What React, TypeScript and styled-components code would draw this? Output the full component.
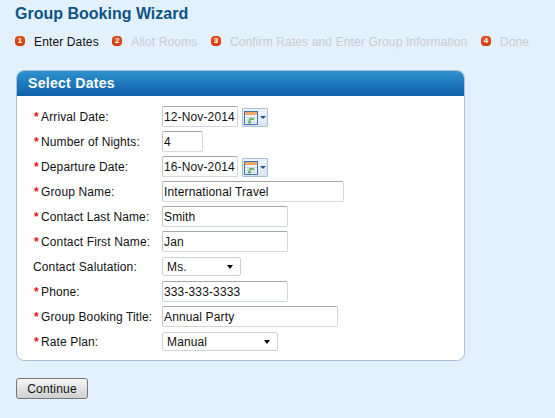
import styled, { createGlobalStyle } from "styled-components";

const GlobalStyle = createGlobalStyle`
  html, body {
    margin: 0;
    padding: 0;
    background: #e3f0fe;
  }
  body {
    font-family: "Liberation Sans", Arial, sans-serif;
    font-size: 12px;
    letter-spacing: 0.13px;
    color: #111;
  }
`;

const Page = styled.div`
  width: 555px;
  height: 418px;
  overflow: hidden;
  padding: 5px 0 0 16px;
  box-sizing: border-box;
`;

const Title = styled.h1`
  margin: 0 0 0 -1px;
  font-size: 16px;
  line-height: 18px;
  font-weight: bold;
  letter-spacing: 0;
  color: #0d5487;
`;

const Steps = styled.ol`
  display: flex;
  align-items: center;
  list-style: none;
  margin: 10px 0 0 -1px;
  padding: 0;
  height: 18px;
  gap: 13.5px;
`;

const Step = styled.li<{ $active?: boolean }>`
  display: flex;
  align-items: center;
  gap: 9px;
  color: ${({ $active }) => ($active ? "#111" : "#c9cdd2")};
`;

const Badge = styled.span`
  display: block;
  width: 10px;
  height: 10px;
  margin-top: -2px;
  border-radius: 4px;
  background: radial-gradient(circle at 50% 35%, #f2561c, #c93207);
  color: #fff;
  font-size: 8px;
  font-weight: bold;
  line-height: 10px;
  letter-spacing: 0;
  text-align: center;
`;

const Panel = styled.section`
  width: 449px;
  margin-top: 19px;
  box-sizing: border-box;
  background: #fff;
  border: 1px solid #a9c0da;
  border-radius: 8px;
  overflow: hidden;
`;

const PanelHeader = styled.h2`
  margin: -1px -1px 0;
  height: 26px;
  padding-left: 12px;
  font-size: 14px;
  line-height: 26px;
  font-weight: bold;
  letter-spacing: 0.3px;
  color: #fff;
  background: linear-gradient(#2f95d0, #0f5fa8);
`;

const Form = styled.div`
  display: grid;
  grid-template-columns: 129px 1fr;
  grid-auto-rows: 25px;
  padding: 10px 0 4px 16px;
  align-items: start;
`;

const Label = styled.div`
  height: 21px;
  line-height: 22px;
  white-space: nowrap;
  display: flex;
`;

const Star = styled.span`
  color: #e8101c;
  font-weight: bold;
  width: 5px;
  margin-right: 2px;
  margin-left: 1px;
`;

const FieldRow = styled.div`
  display: flex;
  align-items: flex-start;
  gap: 4px;
`;

const Input = styled.div<{ $w: number }>`
  width: ${({ $w }) => $w}px;
  height: 21px;
  box-sizing: border-box;
  padding-left: 1px;
  line-height: 21px;
  background: #fff;
  color: #111;
  border: 1px solid #d3d8de;
  border-top-color: #a6a6a6;
  border-left-color: #c4c8cc;
  border-radius: 2px;
  white-space: nowrap;
`;

const Select = styled.div<{ $w: number }>`
  display: flex;
  align-items: center;
  justify-content: space-between;
  width: ${({ $w }) => $w}px;
  height: 19px;
  margin-top: 1px;
  box-sizing: border-box;
  padding: 0 7px 0 4px;
  background: #fff;
  color: #111;
  border: 1px solid #ccd2d9;
  border-radius: 2px;
`;

const Caret = styled.span`
  width: 0;
  height: 0;
  border-left: 3.5px solid transparent;
  border-right: 3.5px solid transparent;
  border-top: 4px solid #000;
`;

const CalendarButton = styled.button`
  display: flex;
  align-items: center;
  gap: 2px;
  width: 26px;
  height: 19px;
  margin-top: 2px;
  padding: 0 0 0 1px;
  box-sizing: border-box;
  background: linear-gradient(#eef4fb, #dbe6f3);
  border: 1px solid #a9bdd4;
  border-radius: 1px;
`;

const BlueCaret = styled.span`
  width: 0;
  height: 0;
  border-left: 3.5px solid transparent;
  border-right: 3.5px solid transparent;
  border-top: 3.5px solid #27517f;
`;

const ContinueButton = styled.button`
  display: block;
  width: 72px;
  height: 21px;
  margin-top: 17px;
  padding: 0;
  font-family: inherit;
  font-size: 12px;
  letter-spacing: 0.2px;
  color: #111;
  background: linear-gradient(#f6f6f6, #cfcfcf);
  border: 1px solid #767676;
  border-radius: 3px;
`;

const CalendarIcon = () => (
  <svg width="14" height="14" viewBox="0 0 14 14">
    <rect x="0.5" y="0.5" width="13" height="13" fill="#fff" stroke="#3f74b0" />
    <rect x="1" y="1" width="12" height="3" fill="#f2a766" />
    <path d="M1 6.5h12M1 9h12M1 11.5h12M4 4v9M7 4v9M10 4v9" stroke="#c9d6e4" strokeWidth="1" />
    <rect x="5" y="7" width="5" height="2" fill="#6dbb5e" />
    <rect x="4" y="9.5" width="3" height="3" fill="#6dbb5e" />
  </svg>
);

const DateField = ({ value }: { value: string }) => (
  <FieldRow>
    <Input $w={76}>{value}</Input>
    <CalendarButton type="button">
      <CalendarIcon />
      <BlueCaret />
    </CalendarButton>
  </FieldRow>
);

const FormLabel = ({ text, required = true }: { text: string; required?: boolean }) => (
  <Label>
    {required && <Star>*</Star>}
    {text}
  </Label>
);

const stepNames = [
  "Enter Dates",
  "Allot Rooms",
  "Confirm Rates and Enter Group Information",
  "Done",
];

const App = () => {
  return (
    <Page>
      <GlobalStyle />
      <Title>Group Booking Wizard</Title>
      <Steps>
        {stepNames.map((name, i) => (
          <Step key={name} $active={i === 0}>
            <Badge>{i + 1}</Badge>
            {name}
          </Step>
        ))}
      </Steps>
      <Panel>
        <PanelHeader>Select Dates</PanelHeader>
        <Form>
          <FormLabel text="Arrival Date:" />
          <DateField value="12-Nov-2014" />
          <FormLabel text="Number of Nights:" />
          <Input $w={41}>4</Input>
          <FormLabel text="Departure Date:" />
          <DateField value="16-Nov-2014" />
          <FormLabel text="Group Name:" />
          <Input $w={182}>International Travel</Input>
          <FormLabel text="Contact Last Name:" />
          <Input $w={126}>Smith</Input>
          <FormLabel text="Contact First Name:" />
          <Input $w={126}>Jan</Input>
          <FormLabel text="Contact Salutation:" required={false} />
          <Select $w={79}>
            Ms.
            <Caret />
          </Select>
          <FormLabel text="Phone:" />
          <Input $w={126}>333-333-3333</Input>
          <FormLabel text="Group Booking Title:" />
          <Input $w={176}>Annual Party</Input>
          <FormLabel text="Rate Plan:" />
          <Select $w={116}>
            Manual
            <Caret />
          </Select>
        </Form>
      </Panel>
      <ContinueButton type="button">Continue</ContinueButton>
    </Page>
  );
};

export default App;
